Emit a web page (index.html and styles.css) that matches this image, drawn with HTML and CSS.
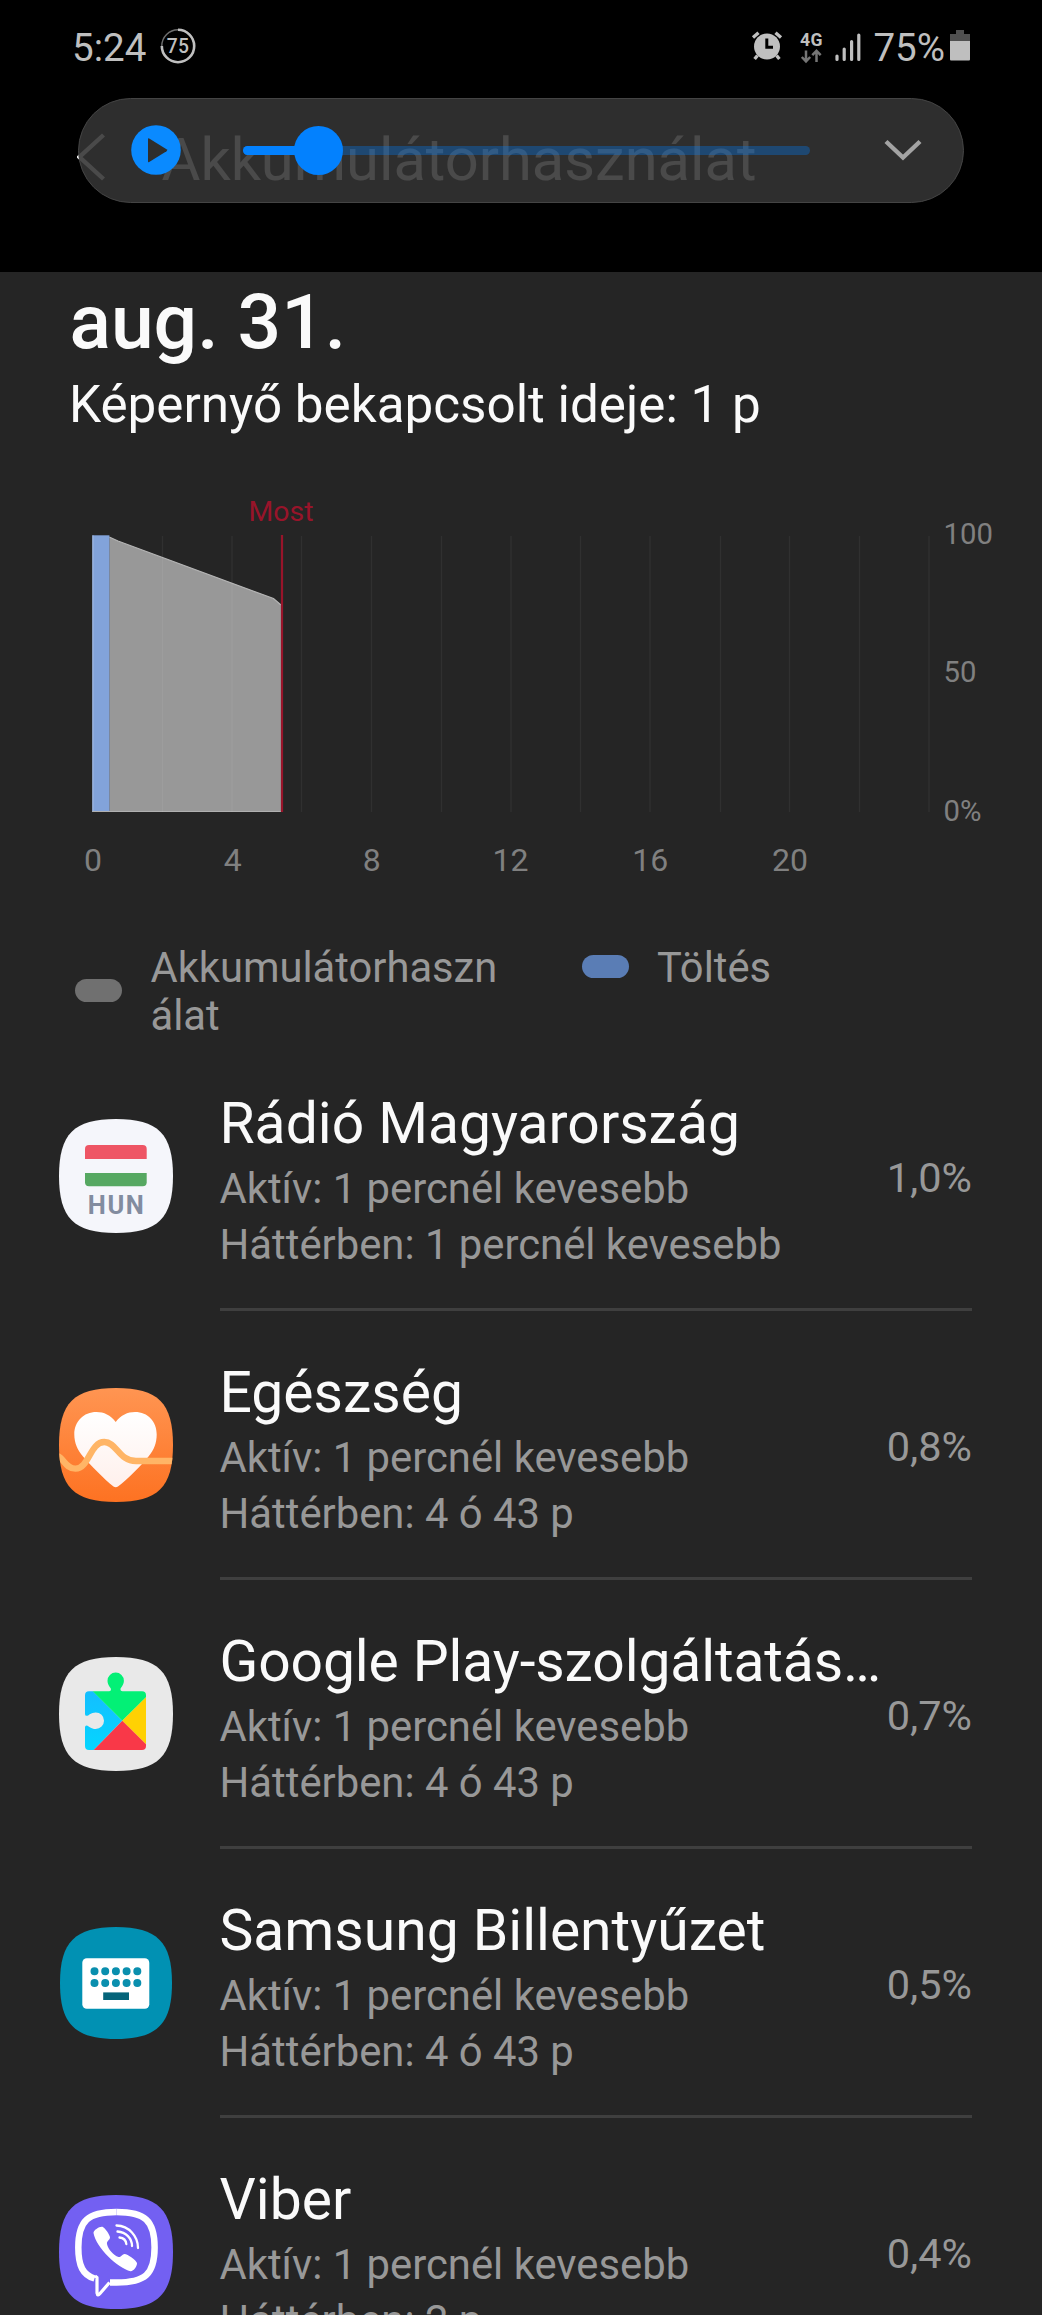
FILE: index.html
```html
<!DOCTYPE html>
<html lang="hu">
<head>
<meta charset="utf-8">
<title>Akkumulátorhasználat</title>
<link rel="stylesheet" href="styles.css">
</head>
<body>
<div class="top">
  <div class="status">
    <span class="clock">5:24</span>
    <svg class="ring" width="36" height="36" viewBox="0 0 36 36" fill="none">
      <circle cx="18" cy="18" r="16.2" stroke="#6e6e6e" stroke-width="1.4"/>
      <path d="M18 1.8A16.2 16.2 0 1 1 1.8 18" stroke="#bfbfbf" stroke-width="2.6"/>
      <text x="18" y="25" text-anchor="middle" class="ring-text">75</text>
    </svg>
    <span class="spacer"></span>
    <svg class="alarm" width="32" height="30" viewBox="0 0 32 30">
      <circle cx="16" cy="15.5" r="13" fill="#bfbfbf"/>
      <path d="M2 6.5L7.5 1.8M30 6.5L24.5 1.8" stroke="#bfbfbf" stroke-width="3.4"/>
      <path d="M6.5 24.5L3.6 28M25.5 24.5L28.4 28" stroke="#bfbfbf" stroke-width="3.4"/>
      <path d="M15.8 7.6V16.3H22" fill="none" stroke="#000" stroke-width="3"/>
    </svg>
    <svg class="net" width="24" height="33" viewBox="0 0 24 33">
      <text x="1" y="15.2" class="net-text" textLength="22.4">4G</text>
      <path d="M7 19.5V30M2.8 26L7 30.4L11.2 26M17.5 31V20M13.3 24.2L17.5 19.8L21.7 24.2" fill="none" stroke="#757575" stroke-width="2.5"/>
    </svg>
    <svg class="signal" width="26" height="30" viewBox="0 0 26 30">
      <path d="M2 24V27.5M9.2 17V27.5M16.6 9.5V27.5M23.8 3V27.5" stroke="#bfbfbf" stroke-width="3.2" stroke-linecap="round"/>
    </svg>
    <span class="percent">75%</span>
    <svg class="battery" width="20" height="31" viewBox="0 0 20 31">
      <path d="M6 0H14V4H20V11H0V4H6Z" fill="#505050"/>
      <path d="M0 11H20V29.5Q20 30.5 19 30.5H1Q0 30.5 0 29.5Z" fill="#bfbfbf"/>
    </svg>
  </div>
  <div class="appbar">
    <svg width="29" height="48" viewBox="0 0 29 48"><path d="M26.5 2L2.5 24L26.5 46" fill="none" stroke="#fafafa" stroke-width="4.4"/></svg>
    <h1 class="title">Akkumulátorhasználat</h1>
    <div class="player">
      <svg class="play" width="50" height="50" viewBox="0 0 50 50">
        <circle cx="25" cy="25" r="24.8" fill="#0a8aff"/>
        <path d="M18.2 13.5L35.5 24.2Q37 25.2 35.5 26.2L18.2 37Q17 37.6 17 36.2V14.2Q17 12.8 18.2 13.5Z" fill="#2e2e2e"/>
      </svg>
      <div class="slider"><div class="fill"></div><div class="knob"></div></div>
      <svg width="38" height="22" viewBox="0 0 38 22"><path d="M2 2.5L19 18.5L36 2.5" fill="none" stroke="#a3a3a3" stroke-width="4.4"/></svg>
    </div>
  </div>
</div>

<main>
  <h2 class="date">aug. 31.</h2>
  <p class="screen-time">Képernyő bekapcsolt ideje: 1 p</p>

  <svg class="chart" width="1042" height="480" viewBox="0 435 1042 480">
    <path d="M109.3 537L118 541L273.5 598.5L281 605V812H109.3Z" fill="#989898"/>
    <path d="M109.3 537L118 541L273.5 598.5L281 605" fill="none" stroke="#b4b4b4" stroke-width="1.2"/>
    <rect x="92.4" y="535.3" width="17" height="276.7" fill="#82a3da"/>
    <path d="M92.9 535.3V812" stroke="#a9bfe6"/>
    <path d="M92.4 811.5H281" stroke="#b0b0b0"/>
    <path d="M162.5 536V812M232 536V812M301.5 536V812M371.5 536V812M441.5 536V812M511 536V812M580.5 536V812M650 536V812M720.5 536V812M789.5 536V812M859.5 536V812M929 536V812" stroke="#fff" stroke-opacity=".055" stroke-width="1.4"/>
    <path d="M282 535V812" stroke="#98142a" stroke-width="2.2"/>
    <text x="281" y="520.7" class="now">Most</text>
    <g class="hours">
      <text x="93" y="871">0</text><text x="232.7" y="871">4</text><text x="371.8" y="871">8</text>
      <text x="510.500" y="871">12</text><text x="650.3" y="871">16</text><text x="790" y="871">20</text>
    </g>
    <g class="levels">
      <text x="943.5" y="544.3">100</text><text x="943.5" y="682.3">50</text><text x="943.5" y="820.7">0%</text>
    </g>
  </svg>

  <div class="legend">
    <div class="key"><span class="swatch used"></span><span>Akkumulátorhaszn<br>álat</span></div>
    <div class="key"><span class="swatch charge"></span><span>Töltés</span></div>
  </div>

  <ul class="apps">
    <li class="app">
      <svg class="icon" viewBox="0 0 114 114">
        <path d="M57 0C15 0 0 15 0 57s15 57 57 57 57-15 57-57S99 0 57 0z" fill="#f5f6fb"/>
        <path d="M26 40V30Q26 26 30 26H83.7Q87.7 26 87.7 30V40Z" fill="#ee5565"/>
        <path d="M26 54V63.3Q26 67.3 30 67.3H83.7Q87.7 67.3 87.7 63.3V54Z" fill="#56a862"/>
        <text x="28.8" y="94.7" class="hun" textLength="56">HUN</text>
      </svg>
      <div class="body">
        <div class="info"><h3>Rádió Magyarország</h3><p>Aktív: 1 percnél kevesebb</p><p>Háttérben: 1 percnél kevesebb</p></div>
        <span class="share">1,0%</span>
      </div>
    </li>
    <li class="app">
      <svg class="icon" viewBox="0 0 114 114">
        <defs>
          <linearGradient id="orange" x1="0" y1="0" x2="0" y2="1"><stop offset="0" stop-color="#ff9552"/><stop offset="1" stop-color="#fd7222"/></linearGradient>
          <linearGradient id="heart" x1="0" y1="0" x2="0" y2="1"><stop offset="0" stop-color="#fff"/><stop offset="1" stop-color="#fff0ec"/></linearGradient>
          <clipPath id="tile"><path d="M57 0C15 0 0 15 0 57s15 57 57 57 57-15 57-57S99 0 57 0z"/></clipPath>
        </defs>
        <g clip-path="url(#tile)">
          <rect width="114" height="114" fill="url(#orange)"/>
          <path d="M56.7 34C51.5 27 45 24 37.5 24C24.5 24 15.3 33.5 15.3 46.5C15.3 55 18.5 62 24 68.5C32 77.5 45 91 54.5 98.5Q56.7 100 59 98.5C69 91 81.5 78 89.5 68.5C95 62 97.7 55 97.7 46.5C97.7 33.5 89 24 76 24C68.5 24 62 27 56.7 34Z" fill="url(#heart)"/>
          <path d="M-1 68C5 71 7 80.7 16.5 80.7C30 80.7 31 54 45.3 54C57.5 54 60 73 77 73H115" fill="none" stroke="#ffb566" stroke-width="6.3"/>
        </g>
      </svg>
      <div class="body">
        <div class="info"><h3>Egészség</h3><p>Aktív: 1 percnél kevesebb</p><p>Háttérben: 4 ó 43 p</p></div>
        <span class="share">0,8%</span>
      </div>
    </li>
    <li class="app">
      <svg class="icon" viewBox="0 0 114 114">
        <defs>
          <clipPath id="piece"><path d="M30 34.3H50Q52.5 34.3 51.8 31.5C51.4 30.3 48.5 28 48.5 23.7A8.2 8.2 0 0 1 64.9 23.7C64.9 28 62 30.3 61.6 31.5Q61 34.3 63.5 34.3H83Q87 34.3 87 38.3V89Q87 93 83 93H30Q26 93 26 89V70.5Q26 68 28.5 68.7C29.7 69 32 72 36.7 72A8.3 8.3 0 0 0 36.7 55.4C32 55.4 29.7 58.4 28.5 58.7Q26 59.4 26 57V38.3Q26 34.3 30 34.3Z"/></clipPath>
          <linearGradient id="blue" x1="0" y1="0" x2="0" y2="1"><stop offset="0" stop-color="#18b8ff"/><stop offset="1" stop-color="#00dcff"/></linearGradient>
        </defs>
        <path d="M57 0C15 0 0 15 0 57s15 57 57 57 57-15 57-57S99 0 57 0z" fill="#e9e9e9"/>
        <g clip-path="url(#piece)">
          <path d="M20 20.3L63.3 63.7L20 108Z" fill="url(#blue)"/>
          <path d="M19.9 20.3V10H98V29.2L63.3 63.7Z" fill="#03f076"/>
          <path d="M98 29.2L63.3 63.7L98 98Z" fill="#ffd103"/>
          <path d="M98 98L63.3 63.7L20 108H98Z" fill="#f93848"/>
        </g>
      </svg>
      <div class="body">
        <div class="info"><h3 class="long">Google Play-szolgáltatás…</h3><p>Aktív: 1 percnél kevesebb</p><p>Háttérben: 4 ó 43 p</p></div>
        <span class="share">0,7%</span>
      </div>
    </li>
    <li class="app">
      <svg class="icon" viewBox="0 0 114 114">
        <path d="M57 1C16 1 1 16 1 57s15 56 56 56 56-15 56-56S98 1 57 1z" fill="#0191b3"/>
        <rect x="23.3" y="32.3" width="67" height="50.4" rx="4.5" fill="#fff"/>
        <path d="M35.5 45.2h.01M46.2 45.2h.01M56.9 45.2h.01M67.6 45.2h.01M78.3 45.2h.01M35.5 57h.01M46.2 57h.01M56.9 57h.01M67.6 57h.01M78.3 57h.01" stroke="#0a8fae" stroke-width="8" stroke-linecap="round"/>
        <rect x="44.2" y="66.4" width="25.8" height="7.6" fill="#05647a"/>
      </svg>
      <div class="body">
        <div class="info"><h3>Samsung Billentyűzet</h3><p>Aktív: 1 percnél kevesebb</p><p>Háttérben: 4 ó 43 p</p></div>
        <span class="share">0,5%</span>
      </div>
    </li>
    <li class="app">
      <svg class="icon" viewBox="0 0 114 114">
        <path d="M57 0C15 0 0 15 0 57s15 57 57 57 57-15 57-57S99 0 57 0z" fill="#7360f2"/>
        <path d="M57.5 17C29 17 19.3 25.5 19.3 52.5C19.3 71 24 80 35.5 83.5" fill="none" stroke="#fff" stroke-width="6.5"/>
        <path d="M57.5 17C86 17 95.6 25.5 95.6 52.5C95.6 79.5 86 87.5 57.5 87.5H51" fill="none" stroke="#fff" stroke-width="6.5"/>
        <path d="M36 81L38 82.5V98Q38.5 101.5 41 98.5L50.5 87.5" fill="none" stroke="#fff" stroke-width="3.2" stroke-linejoin="round"/>
        <path d="M34.5 38C34.2 35 41 31 43.5 31.8C46 33 51 40 51 42.5C51 45 47.5 46 48 49C49 54 54.5 60.5 59.5 62C62.5 62.5 63 59 65.6 59C68.5 59 77.5 65.5 78 68C78.3 71 74.5 76.5 71.5 76.2C59 73 37 53 34.5 38Z" fill="#fff"/>
        <path d="M57.5 30.5C70 31 79 41 79 53M58.5 36.5C67 37 73 43.5 73 51M60.5 42.5C64.5 43 67 45.5 67.3 49" fill="none" stroke="#fff" stroke-width="2.3" stroke-linecap="round"/>
      </svg>
      <div class="body">
        <div class="info"><h3>Viber</h3><p>Aktív: 1 percnél kevesebb</p><p>Háttérben: 2 p</p></div>
        <span class="share">0,4%</span>
      </div>
    </li>
  </ul>
</main>
</body>
</html>
```
FILE: styles.css
```css
* { box-sizing: border-box; margin: 0; padding: 0; }
body {
  width: 1042px;
  height: 2315px;
  overflow: hidden;
  background: #252525;
  color: #fafafa;
  font-family: Roboto, "Liberation Sans", sans-serif;
}
svg { display: block; flex: none; }

.top { height: 272px; background: #000; }
.status {
  height: 98px;
  padding: 0 72px 3px;
  display: flex;
  align-items: center;
  color: #bfbfbf;
  font-size: 38.6px;
}
.spacer { flex: 1; }
.ring { margin: -4px 0 0 13.5px; }
.ring-text { font-size: 19.3px; font-weight: 500; fill: #bfbfbf; letter-spacing: .3px; }
.alarm { margin: -4px 16px 0 0; }
.net { margin: 0 12px 0 0; }
.net-text { font-size: 17.6px; font-weight: 700; fill: #bfbfbf; }
.signal { margin: -2px 12px 0 0; }
.percent { margin-right: 5px; }
.battery { margin-top: -4px; }

.appbar {
  position: relative;
  height: 118px;
  padding-left: 77px;
  display: flex;
  align-items: center;
  gap: 55.5px;
}
.title { font-size: 59.65px; font-weight: 400; line-height: 70px; padding-top: 5px; }
.player {
  position: absolute;
  left: 78px;
  top: 0;
  width: 886px;
  height: 105px;
  padding: 0 40px 1px 52px;
  border: 1px solid #444;
  border-radius: 53px;
  background: rgba(52, 52, 52, .89);
  display: flex;
  align-items: center;
}
.slider {
  position: relative;
  width: 567px;
  height: 9px;
  margin: 0 74px 0 62px;
  border-radius: 5px;
  background: rgba(0, 129, 255, .33);
}
.fill { width: 76px; height: 9px; border-radius: 5px; background: #0381fe; }
.knob {
  position: absolute;
  left: 51px;
  top: -20px;
  width: 49px;
  height: 49px;
  border-radius: 50%;
  background: #0381fe;
}

.date { padding: 6px 0 0 69.5px; font-size: 76.8px; font-weight: 500; line-height: 88px; }
.screen-time { margin-top: 9px; padding-left: 69px; font-size: 51.2px; line-height: 60px; }

.now { font-size: 28.4px; fill: #98142a; text-anchor: middle; }
.hours { font-size: 32px; fill: #808080; text-anchor: middle; }
.levels { font-size: 29.3px; fill: #808080; }

.legend {
  margin-top: 29px;
  padding-left: 75px;
  display: grid;
  grid-template-columns: 506.5px 1fr;
  align-items: start;
  color: #989898;
  font-size: 41.7px;
  line-height: 48.2px;
}
.key { display: flex; align-items: center; gap: 28.5px; }
.swatch { width: 47px; height: 23px; margin-top: -4px; border-radius: 12px; }
.used { background: #707070; }
.charge { background: #5a7db5; }

.apps { list-style: none; margin-top: 1.6px; }
.app {
  height: 269.1px;
  padding: 0 70px 0 59px;
  display: flex;
  align-items: center;
  gap: 46.5px;
}
.icon { width: 114px; height: 114px; margin-top: -2px; }
.body {
  flex: 1;
  height: 100%;
  border-bottom: 3px solid #3f3f3f;
  display: flex;
  align-items: center;
  justify-content: space-between;
}
.info { padding-top: 13px; white-space: nowrap; }
.info h3 { font-size: 57px; font-weight: 400; line-height: 66px; margin-bottom: 4px; }
.info h3.long { letter-spacing: -.12px; }
.info p { font-size: 41.8px; line-height: 56px; color: #989898; }
.share { padding-top: 5px; font-size: 41.5px; color: #989898; }
.hun { font: 700 25.5px Roboto, sans-serif; fill: #828c9f; }
```
